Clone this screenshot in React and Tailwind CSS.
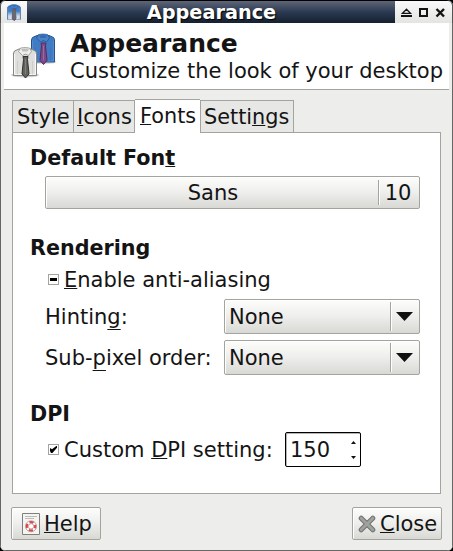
import React from 'react';

const U = ({ children, low }) => (
  <span
    className={
      'underline decoration-1 [text-decoration-skip-ink:none] ' +
      (low ? 'underline-offset-[5px]' : 'underline-offset-[1px]')
    }
  >
    {children}
  </span>
);

const raised =
  'border border-[#a3a49e] rounded-[2px] bg-linear-to-b from-[#fdfdfc] via-[#eeeeec] to-[#d8d9d5] shadow-[inset_1px_1px_0_#ffffff]';

function Shirt({ x, y, body, light, line, collar, tie, tieDark }) {
  return (
    <g transform={`translate(${x} ${y})`}>
      <path d="M6 2 H18 L22.5 4 L23.5 6 V28.5 H.5 V6 L1.5 4 Z" fill={body} stroke={line} strokeWidth="1" />
      <path d="M1.6 7 V27.4 H22.4 V7" stroke={light} strokeWidth="1" fill="none" />
      <path d="M4.5 14 V28 M19.5 14 V28" stroke={line} strokeWidth=".5" opacity=".35" />
      <path d="M7.5 1 Q12 0 16.5 1 L18.5 4.5 L15.5 8.5 L12.5 7 L9.5 8.5 L5.5 4.5 Z" fill={collar} stroke={line} strokeWidth=".7" />
      <path d="M8 2 Q12 1 16 2 L14.5 4.4 H9.5 Z" fill={line} opacity=".45" />
      <path d="M10 9.5 H15 L14.5 12.5 L16 27 L12.5 31 L9 27 L10.5 12.5 Z" fill={tie} stroke={tieDark} strokeWidth="1" />
      <path d="M12.5 12 V27" stroke="#fff" strokeWidth="1" opacity=".2" />
    </g>
  );
}

const BlueShirt = (p) => (
  <Shirt {...p} body="#3f7cc4" light="#5590d2" line="#24508c" collar="#4683ca" tie="#7d4886" tieDark="#5a2a62" />
);

function ShirtsIcon() {
  return (
    <svg width="48" height="48" viewBox="0 0 48 48" className="shrink-0">
      <ellipse cx="35" cy="31" rx="12.5" ry="2.2" fill="#000" opacity=".13" />
      <BlueShirt x={22} y={2.5} />
      <ellipse cx="16" cy="44" rx="14" ry="2.5" fill="#000" opacity=".18" />
      <Shirt x={4} y={16} body="#dededd" light="#fafafa" line="#858783" collar="#efefee" tie="#5f625d" tieDark="#2e3330" />
    </svg>
  );
}

function TitleBar() {
  return (
    <div className="flex h-[23px] shrink-0 bg-linear-to-b from-[#5f6678] via-[#2b3a52] to-[#15202f] border-t border-black">
      <div className="flex w-[27px] items-center border-l border-[#555] bg-linear-to-b from-[#fafafa] to-[#e4e4e2] rounded-tl-[5px] pl-[6px]">
        <svg width="14" height="17" viewBox="0 0 25 32" preserveAspectRatio="none">
          <defs>
            <linearGradient id="fade" x2="0" y2="1">
              <stop offset=".35" stopColor="#fff" stopOpacity="0" />
              <stop offset=".75" stopColor="#eee" stopOpacity=".85" />
            </linearGradient>
          </defs>
          <BlueShirt x={0.5} y={0.5} />
          <path d="M2 5 H9 V29 H2 Z M16 5 H23 V29 H16 Z" fill="url(#fade)" />
          <path d="M9.5 10 H15.5 L17 27 L12.5 31 L8.5 27 Z" fill="#66696d" />
        </svg>
      </div>
      <div className="flex-1 pl-[1px] text-center text-[19.3px] leading-[24px] font-bold text-white [text-shadow:1px_1px_1px_#000]">
        Appearance
      </div>
      <div className="w-[58px] border-r border-[#555] bg-linear-to-b from-[#fafafa] to-[#e4e4e2] rounded-tr-[5px]">
        <svg width="57" height="22" viewBox="0 0 57 22" fill="none" stroke="#141414">
          <path d="M7.5 12.3 L11.5 8.2 L15.5 12.3 Z" strokeWidth="1.3" />
          <path d="M6 15 H17" strokeWidth="2" />
          <path d="M25 8 H32 V15 H25 Z" strokeWidth="2" />
          <path d="M41.5 8 L49 15.5 M49 8 L41.5 15.5" strokeWidth="2.4" />
        </svg>
      </div>
    </div>
  );
}

const Tab = ({ children, className }) => (
  <div className={'h-[33px] border-t border-r border-[#a3a49e] bg-[#e7e7e5] leading-[32px] ' + className}>
    {children}
  </div>
);

const Check = ({ mixed }) => (
  <span className="mr-[5px] h-[11px] w-[11px] shrink-0 border border-[#a3a49e] bg-white">
    <svg width="9" height="9" viewBox="0 0 9 9" className="block">
      {mixed ? (
        <path d="M1 3 H8 V6 H1 Z" fill="#000" />
      ) : (
        <path d="M1 3 L3 4.3 L7.3 1 H8 V2.8 L3.4 8 H2 L1 6 Z" fill="#000" />
      )}
    </svg>
  </span>
);

const Combo = ({ value }) => (
  <div className={'flex h-[35px] w-[196px] items-center ' + raised}>
    <span className="w-[165px] pt-[2px] pl-[4px]">{value}</span>
    <span className="h-[29px] w-[2px] border-l border-[#a3a49e] bg-white" />
    <svg width="17" height="9" viewBox="0 0 17 9" className="ml-[4px]">
      <path d="M0 0 H17 L8.5 9 Z" fill="#111" />
    </svg>
  </div>
);

const Heading = ({ children }) => (
  <div className="h-[24px] pl-[17px] text-[20.7px] font-bold leading-[24px]">{children}</div>
);

export default function App() {
  return (
    <div className="h-[551px] w-[453px] bg-black">
      <div
        className="flex h-[551px] w-[453px] flex-col overflow-hidden rounded-[6px] bg-[#ededeb] text-[21px] whitespace-nowrap text-[#141414]"
        style={{ fontFamily: '"DejaVu Sans", sans-serif' }}
      >
        <TitleBar />
        <div className="flex flex-1 flex-col rounded-b-[4px] border border-t-0 border-[#666]">
          <div className="mx-[3px] flex h-[67px] shrink-0 border-b border-[#a3a49e] bg-white pt-[8px] pl-[5px]">
            <ShirtsIcon />
            <div className="ml-[13px]">
              <div className="h-[27px] text-[25px] leading-[25px] font-bold">Appearance</div>
              <div className="leading-[27px]">Customize the look of your desktop</div>
            </div>
          </div>

          <div className="mt-[9px] ml-[11px] flex h-[34px] items-end">
            <Tab className="w-[62px] border-l pl-[4px]">Style</Tab>
            <Tab className="w-[61px] pl-[3px]">
              <U>I</U>cons
            </Tab>
            <div className="z-10 -mb-[2px] h-[36px] w-[65px] border-t border-[#a3a49e] bg-white pl-[5px] text-[20.8px] leading-[32px]">
              <U>F</U>onts
            </div>
            <Tab className="w-[94px] border-l pl-[3px] text-[20.8px]">
              Setti<U>n</U>gs
            </Tab>
          </div>

          <div className="-mt-px ml-[11px] h-[362px] w-[429px] shrink-0 border border-[#a3a49e] bg-white pt-[13px]">
            <Heading>
              Default Fon<U>t</U>
            </Heading>
            <div className={'mt-[6px] ml-[32px] flex h-[33px] w-[375px] items-center ' + raised}>
              <span className="w-[332px] pt-[2px] pl-[2px] text-center">Sans</span>
              <span className="h-[25px] w-[2px] border-l border-[#a3a49e] bg-white" />
              <span className="flex-1 pt-[2px] pr-[3px] text-center">10</span>
            </div>

            <div className="mt-[27px]">
              <Heading>Rendering</Heading>
            </div>
            <div className="mt-[7px] flex h-[25px] items-center pl-[35px]">
              <Check mixed />
              <span className="pt-[2px]">
                <U>E</U>nable anti-aliasing
              </span>
            </div>
            <div className="mt-[7px] flex h-[35px] items-center justify-between pr-[20px] pl-[32px]">
              <span className="pt-[2px]">
                Hintin<U low>g</U>:
              </span>
              <Combo value="None" />
            </div>
            <div className="mt-[6px] flex h-[35px] items-center justify-between pr-[20px] pl-[32px]">
              <span className="pt-[2px]">
                Sub-<U low>p</U>ixel order:
              </span>
              <Combo value="None" />
            </div>

            <div className="mt-[27px]">
              <Heading>DPI</Heading>
            </div>
            <div className="mt-[6px] flex h-[35px] items-center pl-[35px]">
              <Check />
              <span className="w-[221px] pt-[2px]">
                Custom <U>D</U>PI setting:
              </span>
              <div className="flex h-[35px] w-[76px] items-center justify-between rounded-[2px] border border-black bg-white pr-[4px] pl-[4px] shadow-[inset_1px_1px_0_#b5b5b0]">
                <span className="pt-[2px]">150</span>
                <svg width="5" height="18" viewBox="0 0 5 18">
                  <path d="M0 3 L2.5 0 L5 3 Z M0 15 L2.5 18 L5 15 Z" fill="#111" />
                </svg>
              </div>
            </div>
          </div>

          <div className="mt-[13px] flex h-[33px] items-stretch justify-between pr-[10px] pl-[10px]">
            <div className={'flex w-[90px] items-center pl-[10px] ' + raised}>
              <svg width="18" height="22" viewBox="0 0 18 22" className="mr-[4px]">
                <path d="M.5 .5 H17.5 V21.5 H.5 Z" fill="#f4f4f3" stroke="#7e807b" />
                <path d="M3 3.5 H15 M3 5.5 H12" stroke="#bbb" />
                <circle cx="9" cy="13.3" r="4.2" fill="none" stroke="#fff" strokeWidth="3" />
                <circle cx="9" cy="13.3" r="4.2" fill="none" stroke="#dc4a4a" strokeWidth="2.2" strokeDasharray="4.2 2.4" strokeDashoffset="2.1" />
                <circle cx="9" cy="13.3" r="5.5" fill="none" stroke="#a66" strokeWidth=".6" />
                <circle cx="9" cy="13.3" r="2.7" fill="#fff" stroke="#a66" strokeWidth=".6" />
              </svg>
              <span className="pt-[2px]">
                <U>H</U>elp
              </span>
            </div>
            <div className={'flex w-[90px] items-center pl-[5px] ' + raised}>
              <svg width="18" height="18" viewBox="0 0 18 18" className="mr-[4px]" strokeLinecap="round">
                <path d="M3.2 3.2 L14.8 14.8 M14.8 3.2 L3.2 14.8" stroke="#6f716d" strokeWidth="5" />
                <path d="M3.2 3.2 L14.8 14.8 M14.8 3.2 L3.2 14.8" stroke="#a0a29e" strokeWidth="3" />
              </svg>
              <span className="pt-[2px]">
                <U>C</U>lose
              </span>
            </div>
          </div>
        </div>
      </div>
    </div>
  );
}
